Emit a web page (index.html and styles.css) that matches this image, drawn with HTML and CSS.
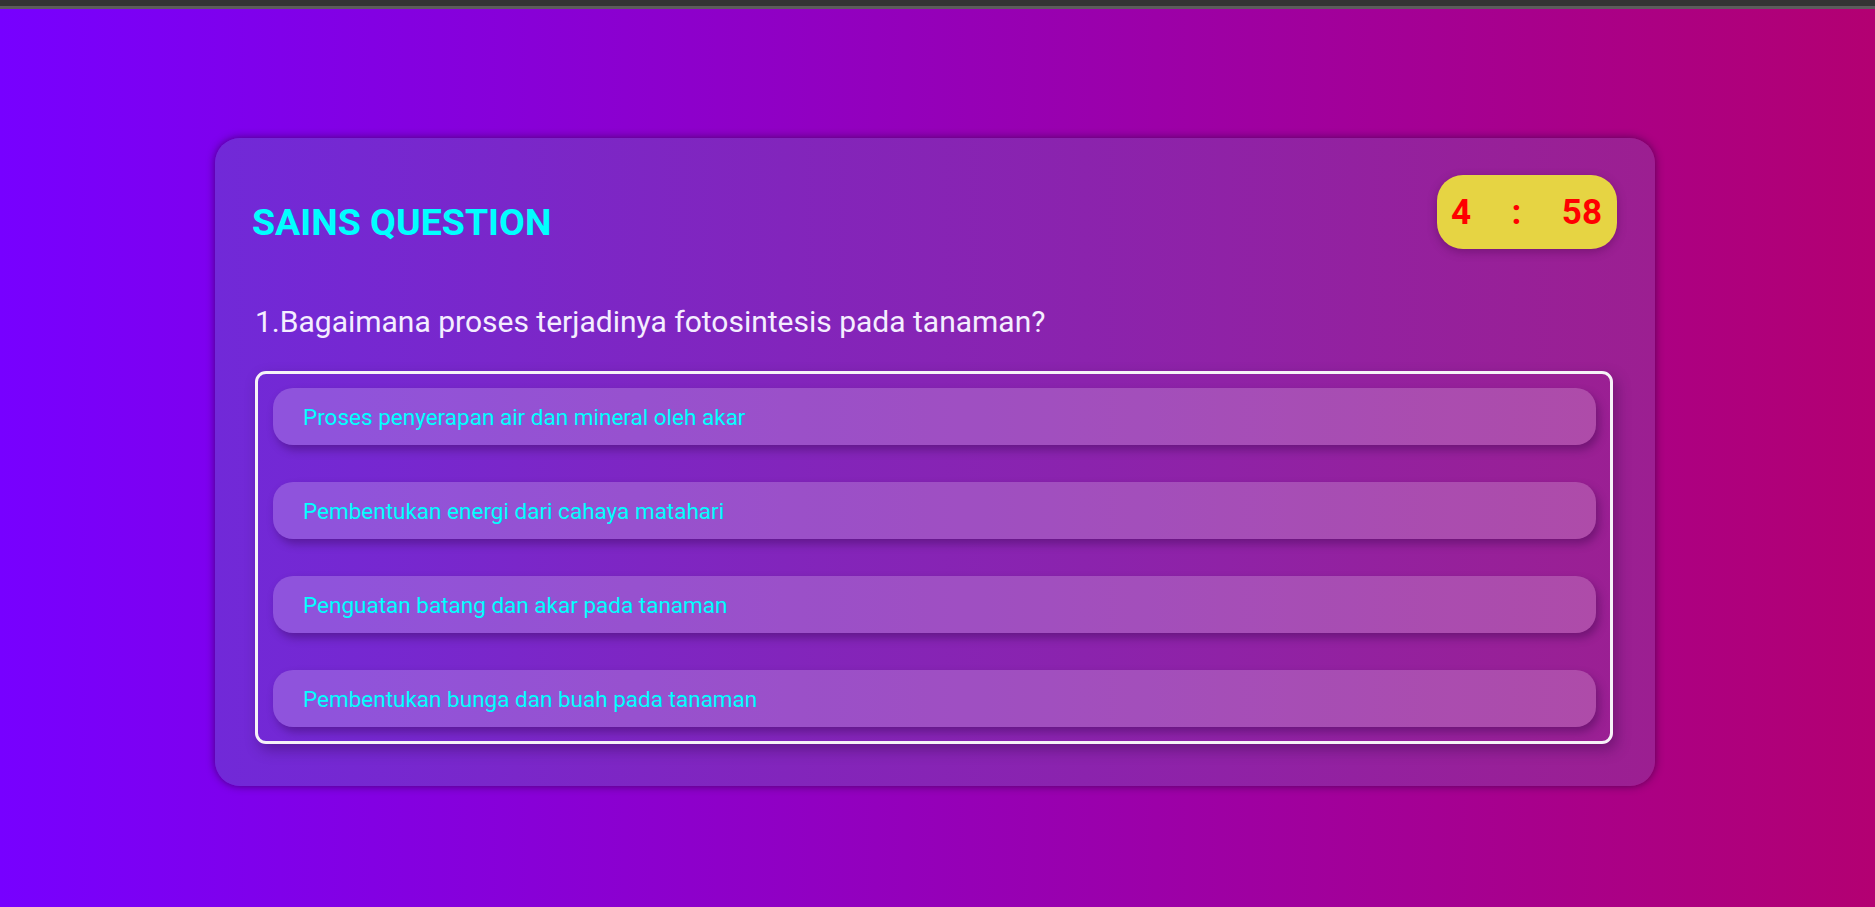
FILE: index.html
```html
<!DOCTYPE html>
<html lang="id">
<head>
<meta charset="utf-8">
<title>Sains Question</title>
<link rel="stylesheet" href="styles.css">
</head>
<body>
<div class="topbar"></div>
<main class="stage">
  <section class="card">
    <header class="card-head">
      <h1 class="title">SAINS QUESTION</h1>
      <div class="timer"><span>4</span><span>:</span><span>58</span></div>
    </header>
    <h2 class="question">1.Bagaimana proses terjadinya fotosintesis pada tanaman?</h2>
    <div class="options">
      <button class="option">Proses penyerapan air dan mineral oleh akar</button>
      <button class="option">Pembentukan energi dari cahaya matahari</button>
      <button class="option">Penguatan batang dan akar pada tanaman</button>
      <button class="option">Pembentukan bunga dan buah pada tanaman</button>
    </div>
  </section>
</main>
</body>
</html>
```

FILE: styles.css
```css
* { box-sizing: border-box; }
html, body { margin: 0; padding: 0; }
body {
  height: 907px;
  overflow: hidden;
  font-family: Roboto, "Liberation Sans", sans-serif;
  background: linear-gradient(to right, #7700ff 0%, #b30072 100%);
}
.topbar {
  height: 9px;
  background: #343434;
  border-bottom: 3px solid #5c5c5c;
}
.stage {
  display: flex;
  justify-content: center;
  padding: 129px 5px 0 0;
}
.card {
  width: 1440px;
  height: 648px;
  padding: 37px 40px 0 40px;
  border-radius: 25px;
  background: linear-gradient(to right, #7129d8 0%, #9c1f91 100%);
  box-shadow: 0 0 8px rgba(40, 0, 60, 0.65);
}
.card-head {
  display: flex;
  justify-content: space-between;
  align-items: flex-start;
  height: 74px;
}
.title {
  margin: 29px 0 0 -3px;
  font-size: 37.5px;
  line-height: 1;
  font-weight: 700;
  color: #00ffff;
}
.timer {
  width: 180px;
  height: 74px;
  margin-right: -2px;
  padding: 0 15px 0 14px;
  display: flex;
  justify-content: space-between;
  align-items: center;
  background: #e6d443;
  border-radius: 26px;
  box-shadow: 0 3px 10px rgba(60, 0, 60, 0.35);
  color: #ff0000;
  font-size: 35px;
  font-weight: 700;
}
.question {
  margin: 56px 0 32px 0;
  font-size: 30px;
  font-weight: 400;
  line-height: 34px;
  color: #f4eeff;
}
.options {
  display: flex;
  flex-direction: column;
  gap: 37px;
  padding: 14px 14px 14px 15px;
  margin-right: 2px;
  border: 3px solid #f6f2f8;
  border-radius: 11px;
  box-shadow: 4px 6px 14px rgba(40, 0, 60, 0.35);
}
.option {
  height: 57px;
  padding: 0 30px;
  display: flex;
  align-items: center;
  border: none;
  border-radius: 20px;
  background: rgba(255, 255, 255, 0.2);
  box-shadow: 3px 5px 8px rgba(40, 0, 60, 0.35);
  color: #00ffff;
  font-family: Roboto, "Liberation Sans", sans-serif;
  font-size: 22.5px;
  text-align: left;
}
```
